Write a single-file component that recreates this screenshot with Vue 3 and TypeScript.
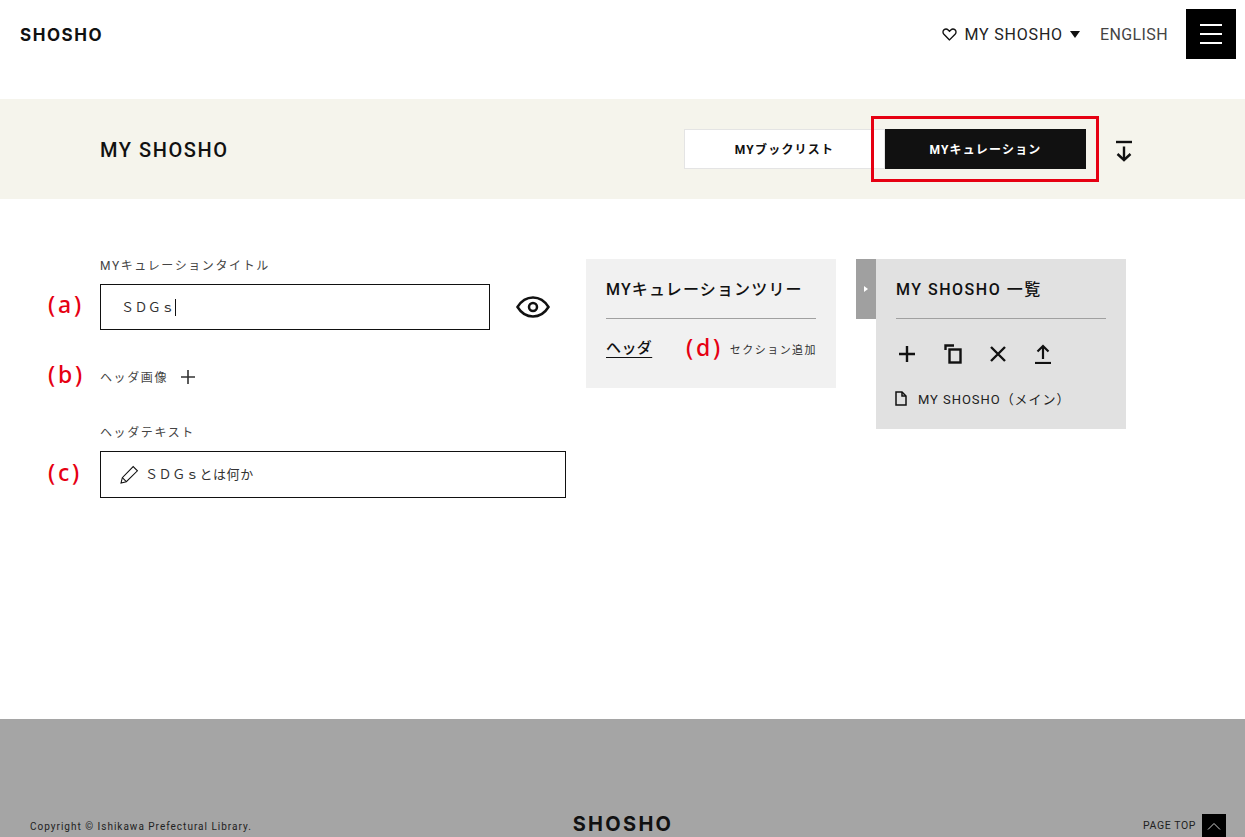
<script setup lang="ts">
const tabs: { label: string; active: boolean }[] = [
  { label: 'MYブックリスト', active: false },
  { label: 'MYキュレーション', active: true },
]
</script>

<template>
  <div class="page">
    <header class="header">
      <div class="logo">SHOSHO</div>
      <nav class="nav">
        <svg class="heart" width="15" height="13" viewBox="0 0 16 14" fill="none" stroke="#111" stroke-width="1.5">
          <path d="M8 12.800 2 6.800C.6 5.300.7 3.200 2 2 3.400.8 5.400 1 6.600 2.200L8 3.600l1.400-1.400C10.600 1 12.600.8 14 2c1.300 1.200 1.400 3.300 0 4.800z" />
        </svg>
        <span class="nav-my">MY SHOSHO</span>
        <span class="caret-down"></span>
        <span class="nav-en">ENGLISH</span>
        <button class="menu" type="button" aria-label="menu">
          <span></span><span></span><span></span>
        </button>
      </nav>
    </header>

    <section class="band">
      <h1 class="band-title">MY SHOSHO</h1>
      <div class="band-right">
        <div class="tabs">
          <div v-for="t in tabs" :key="t.label" class="tab" :class="{ active: t.active }">
            <span class="tab-text">{{ t.label }}</span>
            <span v-if="t.active" class="red-box"></span>
          </div>
        </div>
        <svg class="dl" width="18" height="22" viewBox="0 0 18 22" fill="none" stroke="#111" stroke-width="2.400">
          <path d="M1 2h16" />
          <path d="M9 6.500V20" />
          <path d="M2.500 14 9 20l6.500-6" />
        </svg>
      </div>
    </section>

    <main class="main">
      <div class="form">
        <label class="label">MYキュレーションタイトル</label>
        <div class="title-row">
          <span class="mark">(a)</span>
          <div class="input title-input">
            <span>ＳＤＧｓ</span><i class="cursor"></i>
          </div>
          <svg class="eye" width="34" height="24" viewBox="0 0 34 24" fill="none" stroke="#111" stroke-width="2.500">
            <path d="M1.500 12C5.500 5.500 11 2.500 17 2.500S28.500 5.500 32.500 12C28.500 18.500 23 21.500 17 21.500S5.500 18.500 1.500 12z" />
            <circle cx="17" cy="12" r="4" />
          </svg>
        </div>
        <div class="image-row">
          <span class="mark">(b)</span>
          <span class="label">ヘッダ画像</span>
          <svg class="plus-thin" width="16" height="16" viewBox="0 0 16 16" stroke="#333" stroke-width="1.6">
            <path d="M8 1v14M1 8h14" />
          </svg>
        </div>
        <label class="label head-label">ヘッダテキスト</label>
        <div class="text-row">
          <span class="mark">(c)</span>
          <div class="input text-input">
            <svg width="19" height="19" viewBox="0 0 18 18" fill="none" stroke="#111" stroke-width="1">
              <path d="M1 17l1.200-5L12.500 1.500l4 4L6 15.800z" />
              <path d="M2.200 12 6 15.800" />
            </svg>
            <span>ＳＤＧｓとは何か</span>
          </div>
        </div>
      </div>

      <section class="tree">
        <h2 class="panel-title">MYキュレーションツリー</h2>
        <div class="tree-row">
          <a class="tree-head">ヘッダ</a>
          <span class="mark mark-d">(d)</span>
          <span class="tree-add">セクション追加</span>
        </div>
      </section>

      <div class="side">
        <div class="toggle"><span></span></div>
        <section class="list">
          <h2 class="panel-title list-title">MY SHOSHO 一覧</h2>
          <div class="tools">
            <svg width="18" height="18" viewBox="0 0 18 18" stroke="#111" stroke-width="2.400" fill="none">
              <path d="M9 1v16M1 9h16" />
            </svg>
            <svg width="18" height="20" viewBox="0 0 18 20" stroke="#111" stroke-width="2.400" fill="none">
              <path d="M1.500 6V1.500H10" />
              <rect x="5.500" y="5.500" width="11" height="13" />
            </svg>
            <svg width="18" height="18" viewBox="0 0 18 18" stroke="#111" stroke-width="2.400" fill="none">
              <path d="M2 2l14 14M16 2 2 16" />
            </svg>
            <svg width="16" height="20" viewBox="0 0 16 20" stroke="#111" stroke-width="2.200" fill="none">
              <path d="M8 15V2M2.500 7.500 8 2l5.500 5.500" />
              <path d="M0 19h16" />
            </svg>
          </div>
          <div class="doc">
            <svg width="14" height="15" viewBox="0 0 14 15" fill="none" stroke="#111" stroke-width="1.500">
              <path d="M2 1h6l4 4v9H2z" />
              <path d="M8 1v4h4" />
            </svg>
            <span>MY SHOSHO（メイン）</span>
          </div>
        </section>
      </div>
    </main>

    <footer class="footer">
      <div class="copy">Copyright © Ishikawa Prefectural Library.</div>
      <div class="logo foot-logo">SHOSHO</div>
      <div class="top">
        <span>PAGE TOP</span>
        <span class="top-box">
          <svg width="14" height="8" viewBox="0 0 14 8" fill="none" stroke="#ccc" stroke-width="1">
            <path d="M1 7.500 7 1.500l6 6" />
          </svg>
        </span>
      </div>
    </footer>
  </div>
</template>

<style>
html,
body {
  margin: 0;
  background: #fff;
}
</style>

<style scoped>
.page {
  width: 1245px;
  height: 837px;
  overflow: hidden;
  font-family: Roboto, "Noto Sans CJK JP", sans-serif;
  color: #111;
  display: flex;
  flex-direction: column;
}
.header {
  height: 99px;
  box-sizing: border-box;
  padding: 9px 9px 0 20px;
  display: flex;
  justify-content: space-between;
  align-items: flex-start;
}
.logo {
  font-family: Inter, sans-serif;
  font-weight: 700;
  font-size: 17px;
  letter-spacing: 1.550px;
  line-height: 20px;
  margin-top: 16px;
}
.nav {
  display: flex;
  align-items: center;
  height: 50px;
}
.heart {
  margin-right: 8px;
}
.nav-my {
  font-size: 16px;
  letter-spacing: 0.8px;
  color: #222;
}
.caret-down {
  width: 0;
  height: 0;
  border-left: 5px solid transparent;
  border-right: 5px solid transparent;
  border-top: 7px solid #111;
  margin: 0 20px 0 7px;
}
.nav-en {
  font-size: 16px;
  letter-spacing: 0.4px;
  color: #444;
  margin-right: 18px;
}
.menu {
  width: 50px;
  height: 50px;
  background: #000;
  border: 0;
  padding: 0;
  display: flex;
  flex-direction: column;
  align-items: center;
  justify-content: center;
  gap: 7px;
}
.menu span {
  width: 22px;
  height: 2px;
  background: #fff;
}
.band {
  height: 100px;
  flex: none;
  background: #f5f4ec;
  box-sizing: border-box;
  padding: 0 112px 0 100px;
  display: flex;
  align-items: center;
  justify-content: space-between;
}
.band-title {
  margin: 2px 0 0;
  font-size: 20px;
  font-weight: 500;
  letter-spacing: 1.550px;
}
.band-right {
  display: flex;
  align-items: center;
}
.tabs {
  display: flex;
}
.tab {
  position: relative;
  width: 201px;
  height: 40px;
  box-sizing: border-box;
  background: #fff;
  border: 1px solid #e4e4e4;
  display: flex;
  align-items: center;
  justify-content: center;
  font-size: 12px;
  font-weight: 700;
  letter-spacing: 1.200px;
}
.tab-text {
  margin-top: -2px;
}
.tab.active {
  background: #111;
  border-color: #111;
  color: #fff;
}
.red-box {
  position: absolute;
  left: -15px;
  top: -14px;
  width: 228px;
  height: 66px;
  box-sizing: border-box;
  border: 3px solid #e60012;
}
.dl {
  margin: 3px 0 0 29px;
}
.main {
  flex: none;
  height: 520px;
  box-sizing: border-box;
  padding: 60px 0 0 100px;
  display: flex;
  align-items: flex-start;
  gap: 20px;
}
.form {
  width: 466px;
  flex: none;
}
.label {
  display: block;
  font-size: 12px;
  line-height: 12px;
  letter-spacing: 1.600px;
  color: #444;
  padding-top: 1px;
  margin-bottom: -1px;
}
.mark {
  position: absolute;
  left: -52px;
  top: 50%;
  transform: translateY(-50%);
  margin-top: -3px;
  color: #e60012;
  font-family: "Noto Sans", sans-serif;
  font-size: 23px;
  line-height: 28px;
  letter-spacing: 2.800px;
  font-weight: 500;
}
.title-row {
  position: relative;
  display: flex;
  align-items: center;
  margin-top: 13px;
}
.input {
  box-sizing: border-box;
  border: 1px solid #111;
  display: flex;
  align-items: center;
  font-size: 13px;
  letter-spacing: 0.4px;
  color: #333;
}
.input span {
  margin-top: -2px;
}
.title-input {
  width: 390px;
  height: 46px;
  padding-left: 20px;
}
.cursor {
  width: 1px;
  height: 17px;
  background: #111;
}
.eye {
  margin-left: 26px;
}
.image-row {
  position: relative;
  display: flex;
  align-items: center;
  height: 20px;
  margin-top: 37px;
}
.plus-thin {
  margin-left: 12px;
}
.head-label {
  margin-top: 39px;
}
.text-row {
  position: relative;
  margin-top: 13px;
}
.text-input {
  height: 47px;
  padding-left: 19px;
  gap: 6px;
  letter-spacing: 0.6px;
}
.tree {
  width: 250px;
  height: 129px;
  flex: none;
  box-sizing: border-box;
  padding: 20px;
  background: #f1f1f1;
}
.panel-title {
  margin: 0;
  height: 38px;
  padding-top: 1px;
  font-size: 16px;
  line-height: 20px;
  font-weight: 500;
  letter-spacing: 1.150px;
  border-bottom: 1px solid #a0a0a0;
  white-space: nowrap;
}
.list-title {
  letter-spacing: 1.500px;
}
.tree-row {
  display: flex;
  align-items: center;
  justify-content: space-between;
  height: 58px;
  position: relative;
}
.tree-head {
  font-size: 15px;
  font-weight: 500;
  letter-spacing: 0.4px;
  text-decoration: underline;
  text-underline-offset: 4px;
  margin-top: -3px;
}
.mark-d {
  left: 80px;
  margin-top: -1px;
}
.tree-add {
  font-size: 11px;
  letter-spacing: 1.450px;
  color: #333;
  white-space: nowrap;
  margin: 1px -1px 0 0;
}
.side {
  display: flex;
  align-items: flex-start;
}
.toggle {
  width: 20px;
  height: 60px;
  background: #a0a0a0;
  display: flex;
  align-items: center;
  justify-content: center;
}
.toggle span {
  width: 0;
  height: 0;
  border-top: 3.500px solid transparent;
  border-bottom: 3.500px solid transparent;
  border-left: 4px solid #fff;
}
.list {
  width: 250px;
  height: 170px;
  box-sizing: border-box;
  padding: 20px;
  background: #e1e1e1;
}
.tools {
  display: flex;
  align-items: center;
  gap: 27.500px;
  margin: 25px 0 0 2px;
  height: 20px;
}
.doc {
  display: flex;
  align-items: center;
  gap: 10px;
  margin: 25px 0 0 -2px;
  font-size: 13px;
  letter-spacing: 0.950px;
  color: #222;
  white-space: nowrap;
}
.footer {
  flex: none;
  height: 118px;
  box-sizing: border-box;
  background: #a5a5a5;
  padding: 0 19px 0 30px;
  display: grid;
  grid-template-columns: 1fr auto 1fr;
  align-items: end;
}
.copy {
  font-size: 10px;
  letter-spacing: 1px;
  line-height: 12px;
  margin-bottom: 4px;
  color: #222;
}
.foot-logo {
  font-size: 20px;
  letter-spacing: 2.300px;
  line-height: 24px;
  margin: 0 0 1px;
  transform: translateX(-5px);
}
.top {
  display: flex;
  align-items: center;
  justify-content: flex-end;
  gap: 6px;
  font-size: 10.500px;
  letter-spacing: 0.6px;
  color: #222;
}
.top-box {
  width: 24px;
  height: 23px;
  background: #000;
  display: flex;
  align-items: center;
  justify-content: center;
}
</style>
